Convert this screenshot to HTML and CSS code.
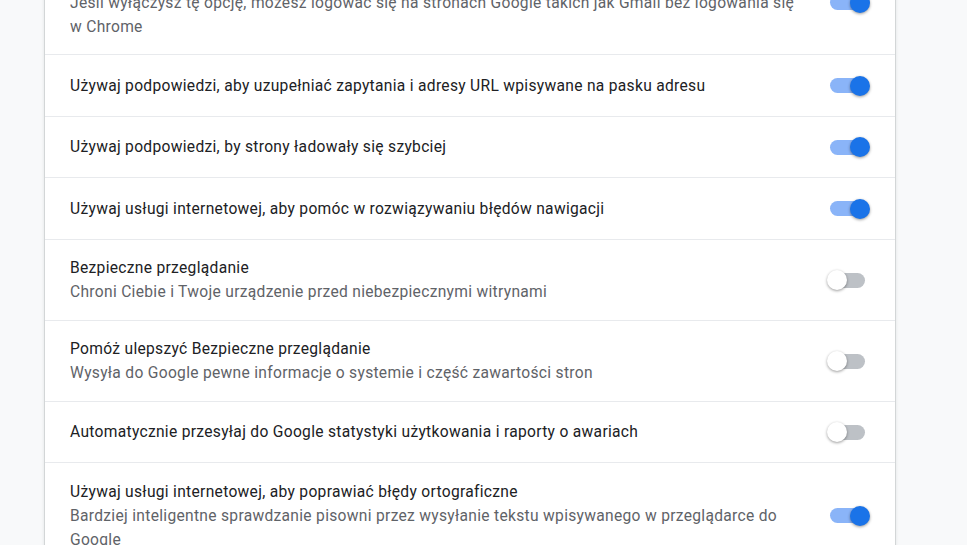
FILE: index.html
```html
<!DOCTYPE html>
<html lang="pl">
<head>
<meta charset="utf-8">
<link rel="stylesheet" href="styles.css">
</head>
<body>
<div class="page">
  <div class="card">
    <div class="row first">
      <div class="text">
        <div class="label">Zezwalaj na logowanie się w Chrome</div>
        <div class="sub">Jeśli wyłączysz tę opcję, możesz logować się na stronach Google takich jak Gmail bez logowania się w Chrome</div>
      </div>
      <div class="toggle on"><span class="bar"></span><span class="knob"></span></div>
    </div>
    <div class="row">
      <div class="text"><div class="label">Używaj podpowiedzi, aby uzupełniać zapytania i adresy URL wpisywane na pasku adresu</div></div>
      <div class="toggle on"><span class="bar"></span><span class="knob"></span></div>
    </div>
    <div class="row">
      <div class="text"><div class="label">Używaj podpowiedzi, by strony ładowały się szybciej</div></div>
      <div class="toggle on"><span class="bar"></span><span class="knob"></span></div>
    </div>
    <div class="row">
      <div class="text"><div class="label">Używaj usługi internetowej, aby pomóc w rozwiązywaniu błędów nawigacji</div></div>
      <div class="toggle on"><span class="bar"></span><span class="knob"></span></div>
    </div>
    <div class="row">
      <div class="text">
        <div class="label">Bezpieczne przeglądanie</div>
        <div class="sub">Chroni Ciebie i Twoje urządzenie przed niebezpiecznymi witrynami</div>
      </div>
      <div class="toggle"><span class="bar"></span><span class="knob"></span></div>
    </div>
    <div class="row">
      <div class="text">
        <div class="label">Pomóż ulepszyć Bezpieczne przeglądanie</div>
        <div class="sub">Wysyła do Google pewne informacje o systemie i część zawartości stron</div>
      </div>
      <div class="toggle"><span class="bar"></span><span class="knob"></span></div>
    </div>
    <div class="row">
      <div class="text"><div class="label">Automatycznie przesyłaj do Google statystyki użytkowania i raporty o awariach</div></div>
      <div class="toggle"><span class="bar"></span><span class="knob"></span></div>
    </div>
    <div class="row">
      <div class="text">
        <div class="label">Używaj usługi internetowej, aby poprawiać błędy ortograficzne</div>
        <div class="sub">Bardziej inteligentne sprawdzanie pisowni przez wysyłanie tekstu wpisywanego w przeglądarce do Google</div>
      </div>
      <div class="toggle on"><span class="bar"></span><span class="knob"></span></div>
    </div>
  </div>
</div>
</body>
</html>
```

FILE: styles.css
```css
html, body {
  margin: 0;
  padding: 0;
  background: #f8f9fa;
  overflow: hidden;
  height: 545px;
}
body {
  font-family: Roboto, "Liberation Sans", sans-serif;
  font-size: 15.6px;
  letter-spacing: 0.3px;
  line-height: 24px;
  color: #202124;
}
.page {
  padding-left: 45px;
  margin-top: -50px;
}
.card {
  width: 850px;
  background: #fff;
  box-shadow: 0 0 0 1px rgba(60, 64, 67, 0.12), 0 1px 3px 1px rgba(60, 64, 67, 0.12);
}
.row {
  display: flex;
  align-items: center;
  box-sizing: border-box;
  min-height: 61.5px;
  padding: 16.5px 25px 15.5px;
  border-top: 1px solid #e8eaed;
}
.row.first {
  border-top: none;
}
.text {
  flex: 1;
  margin-right: 24px;
}
.sub {
  color: #5f6368;
}
.toggle {
  position: relative;
  width: 43px;
  height: 20px;
  flex: none;
}
.bar {
  position: absolute;
  left: 3px;
  top: 2.5px;
  width: 35px;
  height: 15px;
  border-radius: 8px;
  background: #bdc1c6;
}
.knob {
  position: absolute;
  left: 0;
  top: 0;
  width: 20px;
  height: 20px;
  border-radius: 50%;
  background: #fff;
  box-shadow: 0 1px 3px rgba(0, 0, 0, 0.4);
}
.toggle.on .bar {
  background: #8ab4f8;
}
.toggle.on .knob {
  left: 23px;
  background: #1a73e8;
}
```
